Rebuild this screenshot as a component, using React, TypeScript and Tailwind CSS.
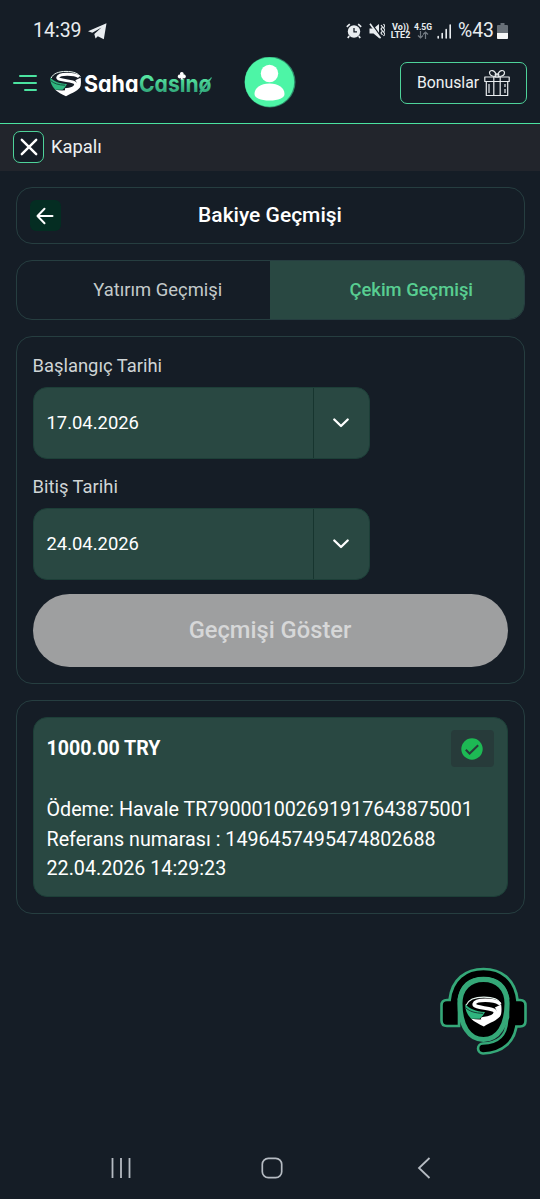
import React, { useState } from 'react';

type Tab = 'deposit' | 'withdraw';

interface Transaction {
  id: string;
  amount: string;
  payment: string;
  reference: string;
  date: string;
}

const transactions: Transaction[] = [
  {
    id: '1',
    amount: '1000.00 TRY',
    payment: 'Havale TR790001002691917643875001',
    reference: '1496457495474802688',
    date: '22.04.2026 14:29:23',
  },
];

const ShieldMark = () => (
  <>
    <path d="M1.200 7.500C3 3 9 .9 16 .9s12.800 2 14.300 5.600" fill="none" stroke="#e8f5ef" strokeWidth="1" />
    <path d="M.2 6.800C3.500 11 9 13 17 13.600l-2 3.200-2.500 2.400H5.200C1.500 15.500 0 11.500.2 6.800Z" fill="#2fb57e" />
    <path d="M.6 10c3.400 3.200 8 4.500 14.400 4.700" fill="none" stroke="#12352f" strokeWidth=".8" />
    <path d="M29 6.300C24.500 2.900 9 2.500 7.800 6.800c-.8 3.900 17.700 2.700 17.900 6.900.1 2.900-4.200 5.300-10.700 5.500" fill="none" stroke="#fff" strokeWidth="3" />
    <path d="M5.200 19.200c6.300 1.300 13.600.7 17.800-1.400 3.700-2 4.700-5.300 2.300-8l5.300-2.600c.5 3 .4 5.500 0 8-1 4.600-8.600 7-14.600 10.600-4.400-2.100-8-4-10.800-6.600Z" fill="#fff" />
  </>
);

const Logo = () => (
  <svg className="overflow-visible" width="163" height="34" viewBox="0 0 163 34" aria-label="SahaCasino">
    <defs>
      <linearGradient id="casino" x1="0" y1="0" x2="0" y2="1">
        <stop offset="0.3" stopColor="#55e3a0" />
        <stop offset="0.9" stopColor="#2c9c74" />
      </linearGradient>
    </defs>
    <g transform="translate(0 4.500)">
      <ShieldMark />
    </g>
    <g className="[font-family:Inter,sans-serif] [font-feature-settings:'cv11']" fontSize="23.500" fontWeight="700">
      <text x="34" y="26" textLength="54.500" lengthAdjust="spacingAndGlyphs" fill="#fff">Saha</text>
      <text x="89" y="26" textLength="72.500" lengthAdjust="spacingAndGlyphs" fill="url(#casino)">Casinø</text>
    </g>
    <path d="m149.500 28.500 12-17" stroke="#3fbf8a" strokeWidth="1.200" />
    <path d="M131.800 5.900a1.900 1.900 0 0 1 1.600 2.800 1.900 1.900 0 1 1-.8 3.100l.5 1.700h-2.600l.5-1.700a1.900 1.900 0 1 1-.8-3.100 1.900 1.900 0 0 1 1.600-2.800Z" fill="#fff" />
  </svg>
);

const StatusBar = () => (
  <div className="flex h-[42px] items-center justify-between pt-5 pr-8 pl-[33px] text-[#e9edf0]">
    <div className="flex items-center gap-1.5">
      <span className="text-[19.5px] leading-none">14:39</span>
      <svg width="19" height="17" viewBox="0 0 19 17" fill="currentColor">
        <path d="M18.500.2 15.800 16.300 9.800 13.200 7.500 15.500 6.300 11 13.500 4.500 4.300 9.800 0 8.300Z" />
      </svg>
    </div>
    <div className="flex items-center">
      <svg width="16" height="16" viewBox="0 0 16 16">
        <path d="m.8 3.800 3-2.600M15.200 3.800l-3-2.600M3.200 13 1.800 15M12.800 13l1.400 2" stroke="currentColor" strokeWidth="1.700" />
        <circle cx="8" cy="8.500" r="6.200" fill="currentColor" />
        <path d="M8 5v3.800h3" fill="none" stroke="#151d26" strokeWidth="1.300" />
      </svg>
      <svg className="ml-[7px]" width="16" height="16" viewBox="0 0 16 16">
        <path d="M.5 5.500h4L10 1v14l-5.500-4.500h-4Z" fill="currentColor" />
        <path d="m2.200.3 10 14" stroke="#151d26" strokeWidth="1.600" />
        <path d="m1 .8 10.500 14.500" stroke="currentColor" strokeWidth="1.600" />
        <path d="m12 2 1.500 2L12 6l1.500 2L12 10l1.500 2M14.500 1 16 3l-1.500 2L16 7l-1.500 2 1.500 2-1.500 2" fill="none" stroke="currentColor" strokeWidth="1.200" />
      </svg>
      <div className="ml-[5px] w-[21px] text-center text-[9px] leading-[8.5px] font-bold">
        <div>Vo))</div>
        <div>LTE2</div>
      </div>
      <div className="ml-[3px] flex w-[18px] flex-col items-center text-[8.5px] leading-[8px] font-bold">
        <span>4.5G</span>
        <svg width="12" height="8" viewBox="0 0 12 8" fill="none" stroke="#727a82" strokeWidth="1.200">
          <path d="M3.500 0v7M1 4.500 3.500 7 6 4.500M8.500 8V1M6 3.500 8.500 1 11 3.500" />
        </svg>
      </div>
      <svg className="ml-[5px]" width="15" height="15" viewBox="0 0 15 15" stroke="currentColor" strokeWidth="1.600" strokeLinecap="round">
        <path d="M1.200 12.500v1.500M5.200 9.500v4.500M9.200 5.500v8.500M13.200 1v13" />
      </svg>
      <span className="ml-1.5 text-[19.4px] leading-none">%43</span>
      <svg className="ml-[3px]" width="11" height="16" viewBox="0 0 11 16">
        <path d="M3.500 0h4v2H10a1 1 0 0 1 1 1v12a1 1 0 0 1-1 1H1a1 1 0 0 1-1-1V3a1 1 0 0 1 1-1h2.500Z" fill="#687078" />
        <path d="M0 10h11v5a1 1 0 0 1-1 1H1a1 1 0 0 1-1-1Z" fill="#f4f6f7" />
      </svg>
    </div>
  </div>
);

const GiftIcon = () => (
  <svg width="26" height="28" viewBox="0 0 26 28" fill="none" stroke="#e8ecee" strokeWidth="1.200" strokeLinejoin="round">
    <path d="M.8 8h24.400v4.500H.8ZM2.300 12.500v14h21.400v-14M9.800 8v18.500M16.200 8v18.500M5 15v9M21 15v3M21 20v4" />
    <path d="M11.500 7.500C8 7.500 5.500 6 5.500 3.800 5.500.5 11 .2 12.500 6.500M14.500 7.500c3.500 0 6-1.500 6-3.700C20.500.5 15 .2 13.500 6.500" />
    <path d="M11.300 5h3.400v3h-3.400Z" />
  </svg>
);

const Header = () => (
  <header className="flex h-[82px] items-center border-b border-[#4be3a0] px-[13px]">
    <button aria-label="Menü">
      <svg width="24" height="18" viewBox="0 0 24 18" stroke="#4be3a0" strokeWidth="2" strokeLinecap="round">
        <path d="M7 2h16M1 9h22M12 16h11" />
      </svg>
    </button>
    <div className="ml-[13px]">
      <Logo />
    </div>
    <button className="ml-[31px]" aria-label="Profil">
      <svg width="52" height="52" viewBox="0 0 52 52">
        <circle cx="26" cy="25" r="25.500" fill="#2d8a68" />
        <circle cx="25.500" cy="25" r="24.700" fill="#4df5a6" />
        <circle cx="25.500" cy="16.500" r="8.700" fill="#fff" />
        <path d="M10.500 37c0-6 6-10.500 15-10.500S40.500 31 40.500 37c0 4-6 6.500-15 6.500s-15-2.500-15-6.500Z" fill="#fff" />
      </svg>
    </button>
    <button className="ml-auto flex h-[42px] w-[127px] items-center justify-center gap-[5px] rounded-[7px] border border-[#4ed39a] text-[15.8px] text-[#eef1f2]">
      Bonuslar
      <GiftIcon />
    </button>
  </header>
);

interface DateFieldProps {
  label: string;
  value: string;
}

const DateField: React.FC<DateFieldProps> = ({ label, value }) => (
  <div>
    <div className="h-[29px] text-[18.4px] leading-[25px] text-[#cfd5d6]">{label}</div>
    <div className="mt-[5px] flex h-[72px] w-[337px] overflow-hidden rounded-[14px] border border-[#1d3f38] bg-[#294842] text-[18.4px] text-white">
      <div className="flex flex-1 items-center pl-[13px]">{value}</div>
      <button className="flex w-14 items-center justify-center border-l border-[#17352f]" aria-label={label}>
        <svg width="18" height="10" viewBox="0 0 18 10" fill="none" stroke="#fff" strokeWidth="2.300" strokeLinecap="round" strokeLinejoin="round">
          <path d="m2.300 1.500 6.700 6.500 6.700-6.500" />
        </svg>
      </button>
    </div>
  </div>
);

const TransactionCard: React.FC<{ transaction: Transaction }> = ({ transaction }) => (
  <div className="h-[180px] rounded-[14px] border border-[#1d3f38] bg-[#294842] px-[13px] pt-3 text-[19.7px] leading-[29.5px] text-white">
    <div className="flex items-center justify-between">
      <span className="text-[19.6px] font-bold">{transaction.amount}</span>
      <span className="flex h-[37px] w-[43px] items-center justify-center rounded-[4px] bg-[#273b3a]">
        <svg width="22" height="22" viewBox="0 0 22 22">
          <circle cx="11" cy="11" r="10.700" fill="#1db954" />
          <path d="m4.800 11.800 3.800 3.700 8.600-8.300" fill="none" stroke="#273b3a" strokeWidth="2" />
        </svg>
      </span>
    </div>
    <div className="mt-7">
      <p>Ödeme: {transaction.payment}</p>
      <p>Referans numarası : {transaction.reference}</p>
      <p>{transaction.date}</p>
    </div>
  </div>
);

const SupportButton = () => (
  <button className="absolute top-[965px] left-[438px]" aria-label="Canlı destek">
    <svg width="90" height="93" viewBox="18 15 90 93" strokeLinecap="round">
      <g fill="none" stroke="#35a878">
        <path d="M34 50C36 32 48 23.500 63.500 23.500S91 32 93 50" strokeWidth="11.500" />
        <path d="M92 72C91 89 80 98 63 98.500" strokeWidth="12.500" />
      </g>
      <path
        d="M39 49h-5q-1 0-2 1h-5q-5.500 0-5.500 5.500v15q0 5.500 5.500 5.500h12ZM88 48h6q1 0 2 2h4q5.500 0 5.500 5.500v15.500q0 5.500-5.500 5.500H88Z"
        fill="#000"
        stroke="#35a878"
        strokeWidth="2.600"
      />
      <g fill="none" stroke="#000">
        <path d="M34 51C36 32 48 23.500 63.500 23.500S91 32 93 51" strokeWidth="6.300" />
        <path d="M92 71C91 89 80 98 63 98.500" strokeWidth="7.300" />
      </g>
      <path d="M63.500 29.500c14 0 23.500 9 23.500 24 0 22-9 36-23.500 36S40 75.500 40 53.500c0-15 9.500-24 23.500-24Z" fill="#000" stroke="#35a878" strokeWidth="5" />
      <g transform="translate(45 46) scale(1.180)">
        <ShieldMark />
      </g>
    </svg>
  </button>
);

const NavBar = () => (
  <nav className="mt-auto grid h-[63px] grid-cols-3 place-items-center pr-10 pl-[45px] text-[#b5bbc2]">
    <svg width="22" height="22" viewBox="0 0 22 22" stroke="currentColor" strokeWidth="1.800">
      <path d="M2.500 1v20M11 1v20M19.500 1v20" />
    </svg>
    <svg width="22" height="22" viewBox="0 0 22 22" fill="none" stroke="currentColor" strokeWidth="1.700">
      <rect x="1.300" y="1.300" width="19.400" height="19.400" rx="6" />
    </svg>
    <svg width="14" height="22" viewBox="0 0 14 22" fill="none" stroke="currentColor" strokeWidth="1.800">
      <path d="M12.500 1 2 11l10.500 10" />
    </svg>
  </nav>
);

export default function App() {
  const [activeTab, setActiveTab] = useState<Tab>('withdraw');

  const tabClass = (tab: Tab) =>
    activeTab === tab
      ? 'bg-[#294842] font-medium text-[#58ce91]'
      : 'text-[#c3caca]';

  return (
    <div className="relative flex h-[1199px] w-[540px] flex-col overflow-hidden bg-[#151d26] [font-family:Roboto,sans-serif]">
      <StatusBar />
      <Header />

      <div className="flex h-[47px] items-center gap-[7px] bg-[#22252c] pb-px pl-[13px] text-[18.4px] text-[#eceff0]">
        <button className="flex h-8 w-[31px] items-center justify-center rounded-[7px] border border-[#4ed39a] bg-[#151d26]" aria-label="Kapat">
          <svg width="18" height="18" viewBox="0 0 18 18" stroke="#fff" strokeWidth="2.400" strokeLinecap="round">
            <path d="m1.800 1.800 14.400 14.400M16.200 1.800 1.800 16.200" />
          </svg>
        </button>
        Kapalı
      </div>

      <main className="flex flex-col gap-4 px-[15.5px] pt-4">
        <div className="grid h-[57px] grid-cols-[31px_1fr_31px] items-center rounded-[16px] border border-[#263e40] px-[13px]">
          <button className="flex h-[31px] w-[31px] items-center justify-center rounded-[6px] bg-[#042d22]" aria-label="Geri">
            <svg width="18" height="18" viewBox="0 0 18 18" fill="none" stroke="#fff" strokeWidth="2" strokeLinecap="round" strokeLinejoin="round">
              <path d="M16.500 9H1.500M8.500 1.800 1.500 9l7 7.200" />
            </svg>
          </button>
          <h1 className="text-center text-[21px] font-medium text-white">Bakiye Geçmişi</h1>
        </div>

        <div className="flex h-[60px] overflow-hidden rounded-[16px] border border-[#263e40] text-[18.4px]">
          <button className={`flex-1 pl-[29px] ${tabClass('deposit')}`} onClick={() => setActiveTab('deposit')}>
            Yatırım Geçmişi
          </button>
          <button className={`flex-1 pl-[29px] ${tabClass('withdraw')}`} onClick={() => setActiveTab('withdraw')}>
            Çekim Geçmişi
          </button>
        </div>

        <section className="h-[348px] rounded-[16px] border border-[#263e40] px-4 pt-4">
          <DateField label="Başlangıç Tarihi" value="17.04.2026" />
          <div className="mt-[15px]">
            <DateField label="Bitiş Tarihi" value="24.04.2026" />
          </div>
          <button className="mt-[14px] h-[73px] w-full rounded-full bg-[#9e9fa0] text-[23.7px] font-medium text-[#d6d7d8]">
            Geçmişi Göster
          </button>
        </section>

        <section className="h-[214px] rounded-[16px] border border-[#263e40] p-4">
          {transactions.map(transaction => (
            <TransactionCard key={transaction.id} transaction={transaction} />
          ))}
        </section>
      </main>

      <SupportButton />
      <NavBar />
    </div>
  );
}
